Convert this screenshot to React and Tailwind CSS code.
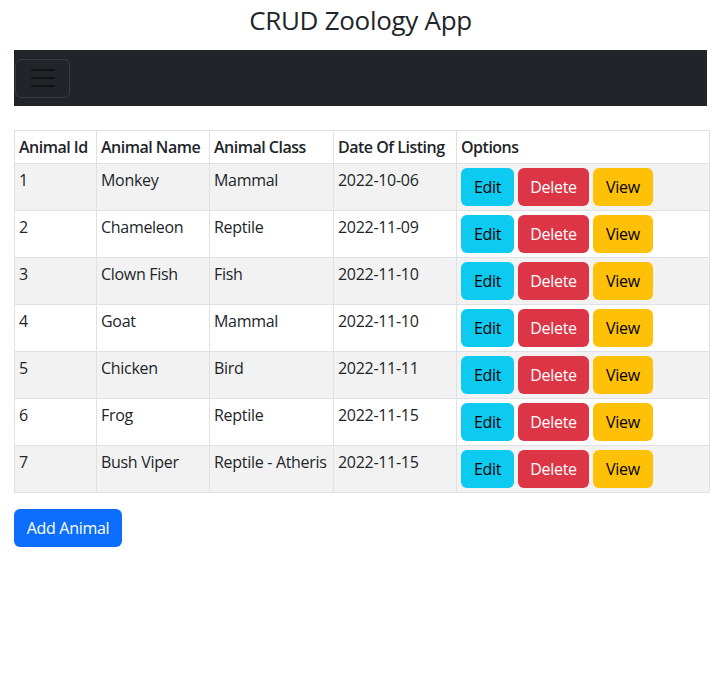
import React from 'react';

const animals = [
  { id: 1, name: 'Monkey', cls: 'Mammal', date: '2022-10-06' },
  { id: 2, name: 'Chameleon', cls: 'Reptile', date: '2022-11-09' },
  { id: 3, name: 'Clown Fish', cls: 'Fish', date: '2022-11-10' },
  { id: 4, name: 'Goat', cls: 'Mammal', date: '2022-11-10' },
  { id: 5, name: 'Chicken', cls: 'Bird', date: '2022-11-11' },
  { id: 6, name: 'Frog', cls: 'Reptile', date: '2022-11-15' },
  { id: 7, name: 'Bush Viper', cls: 'Reptile - Atheris', date: '2022-11-15' },
];

const cell = 'border border-[#dee2e6] px-[4px] py-[4px] align-top';

export default function App() {
  return (
    <div className="min-h-[682px] bg-white text-[#212529] text-[16px] leading-[24px] font-['Segoe_UI','Open_Sans',sans-serif]">
      <div className="h-[50px] pt-[3px] text-center">
        <h3 className="text-[26px] leading-[34px] font-medium tracking-[-0.3px]">CRUD Zoology App</h3>
      </div>

      <div className="mx-[14px]">
        {/* Navbar */}
        <nav className="h-[56px] bg-[#212529] flex items-center">
          <button className="ml-[1px] w-[55px] h-[39px] rounded-[6px] border border-white/10 flex flex-col items-center justify-center gap-[6px]">
            <span className="block w-[24px] h-[2px] bg-[#111315]" />
            <span className="block w-[24px] h-[2px] bg-[#111315]" />
            <span className="block w-[24px] h-[2px] bg-[#111315]" />
          </button>
        </nav>

        {/* Table */}
        <table className="mt-[24px] w-[696px] table-fixed border-collapse">
          <colgroup>
            <col className="w-[82px]" />
            <col className="w-[113px]" />
            <col className="w-[124px]" />
            <col className="w-[123px]" />
            <col />
          </colgroup>
          <thead>
            <tr className="h-[33px]">
              {['Animal Id', 'Animal Name', 'Animal Class', 'Date Of Listing', 'Options'].map(h => (
                <th key={h} className={`${cell} text-left font-semibold tracking-[-0.5px] whitespace-nowrap overflow-hidden`}>{h}</th>
              ))}
            </tr>
          </thead>
          <tbody className="tracking-[-0.3px]">
            {animals.map((a, i) => (
              <tr key={a.id} className={i % 2 === 0 ? 'bg-[#f2f2f2]' : 'bg-white'}>
                <td className={cell}>{a.id}</td>
                <td className={`${cell} whitespace-nowrap`}>{a.name}</td>
                <td className={`${cell} whitespace-nowrap overflow-hidden`}>{a.cls}</td>
                <td className={cell}>{a.date}</td>
                <td className={cell}>
                  <div className="flex gap-[4px]">
                    <button className="w-[53px] h-[38px] rounded-[6px] bg-[#0dcaf0] text-black">Edit</button>
                    <button className="w-[71px] h-[38px] rounded-[6px] bg-[#dc3545] text-white">Delete</button>
                    <button className="w-[60px] h-[38px] rounded-[6px] bg-[#ffc107] text-black">View</button>
                  </div>
                </td>
              </tr>
            ))}
          </tbody>
        </table>

        <button className="mt-[16px] w-[108px] h-[38px] rounded-[6px] bg-[#0d6efd] text-white tracking-[-0.3px]">Add Animal</button>
      </div>
    </div>
  );
}
